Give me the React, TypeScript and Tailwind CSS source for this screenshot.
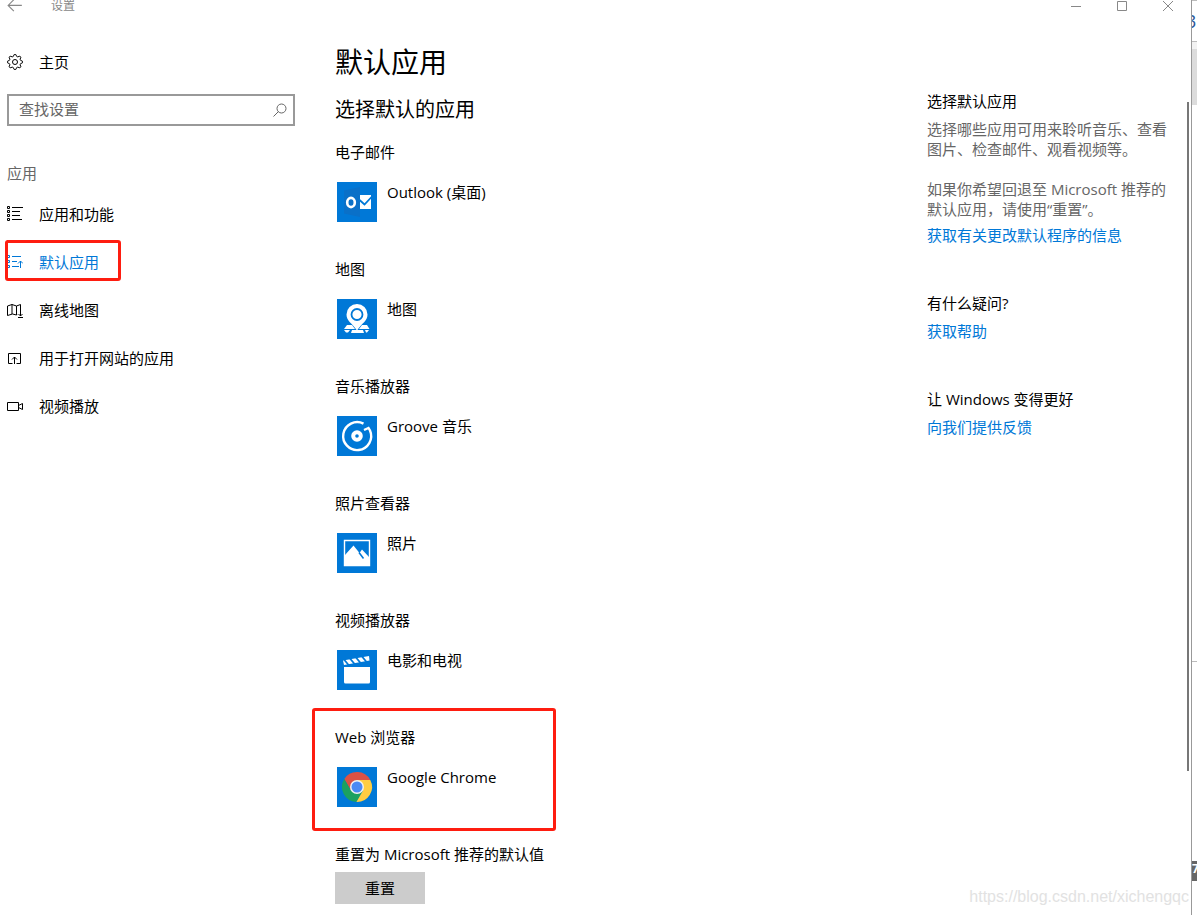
import { type ReactNode } from 'react';

interface IAppEntry {
  category: string;
  name: string;
  icon: ReactNode;
  highlighted?: boolean;
}

interface INavEntry {
  label: string;
  icon: ReactNode;
  active?: boolean;
}

const gearPoints = Array.from({ length: 32 }, (_, i) => {
  const radius = i % 4 < 2 ? 7.6 : 5.8;
  const angle = ((i - 0.5) * Math.PI) / 16;
  return `${(8 + radius * Math.sin(angle)).toFixed(2)},${(8 - radius * Math.cos(angle)).toFixed(2)}`;
}).join(' ');

function LineIcon({ children }: { children: ReactNode }) {
  return (
    <svg
      aria-hidden="true"
      viewBox="0 0 16 16"
      className="h-4 w-4 shrink-0"
      fill="none"
      stroke="currentColor"
      strokeWidth="1"
    >
      {children}
    </svg>
  );
}

function Tile({ children }: { children: ReactNode }) {
  return (
    <svg aria-hidden="true" viewBox="0 0 40 40" className="h-10 w-10 shrink-0 bg-[#0078d7]">
      {children}
    </svg>
  );
}

const navEntries: INavEntry[] = [
  {
    label: '应用和功能',
    icon: (
      <LineIcon>
        <path d="M.5.5h2v2h-2zM.5 4.500h2v2h-2zM.5 8.500h2v2h-2zM.5 12.500h2v2h-2z" />
        <path d="M5 1.500h11M5 5.500h8M5 9.500h8M5 13.500h10" />
      </LineIcon>
    )
  },
  {
    label: '默认应用',
    active: true,
    icon: (
      <LineIcon>
        <path d="M.5 1.500h2v2h-2zM.5 6.500h2v2h-2zM.5 11.500h2v2h-2z" />
        <path d="M5 2.500h9M5 7.500h5M5 12.500h7M13.500 14V7M11 9.500 13.500 7 16 9.500" />
      </LineIcon>
    )
  },
  {
    label: '离线地图',
    icon: (
      <LineIcon>
        <path d="M10 12.500 9.500 13 5.500 12 .5 13.500V4L5 2.500 9.500 4l4-1.500V8M5 2.500V12M9.500 4v9M13.500 8v6M11.500 12l2 2 2-2M11 15.500h5" />
      </LineIcon>
    )
  },
  {
    label: '用于打开网站的应用',
    icon: (
      <LineIcon>
        <path d="M5.500 13.500h-4v-10h12v10h-4M7.500 14V7M5 9.500 7.500 7 10 9.500" />
      </LineIcon>
    )
  },
  {
    label: '视频播放',
    icon: (
      <LineIcon>
        <path d="M.5 4.500h11v8H.5zM11.500 7.500l4-2v6l-4-2" />
      </LineIcon>
    )
  }
];

const appEntries: IAppEntry[] = [
  {
    category: '电子邮件',
    name: 'Outlook (桌面)',
    icon: (
      <Tile>
        <path d="M7 8.500 23 5v30L7 31.500z" fill="#0a70c8" />
        <ellipse cx="14" cy="20.500" rx="3.800" ry="4.600" fill="none" stroke="#fff" strokeWidth="2.600" />
        <path d="M23 13h11v14H23z" fill="#fff" />
        <path d="m22 17.500 5.500 5L35 14.500" fill="none" stroke="#0078d7" strokeWidth="1.800" />
      </Tile>
    )
  },
  {
    category: '地图',
    name: '地图',
    icon: (
      <Tile>
        <path d="M10 26h5l3 4h-11zM25 26h5l2.500 4H22zM7 31h6l-2 2.500H9zM15 31h11l1 3H14zM28 31h4l-2 2.500h-1z" fill="#fff" />
        <path
          d="M20 5A10.500 10.500 0 0 0 9.500 15.500C9.500 22 15 24 20 31.500 25 24 30.500 22 30.500 15.500A10.500 10.500 0 0 0 20 5z"
          fill="#fff"
        />
        <circle cx="20" cy="15.500" r="5.500" fill="none" stroke="#0078d7" strokeWidth="1.800" />
      </Tile>
    )
  },
  {
    category: '音乐播放器',
    name: 'Groove 音乐',
    icon: (
      <Tile>
        <path d="M26.500 7.600A14 14 0 1 0 33 14.500L31.500 12l-4.500 2" fill="none" stroke="#fff" strokeWidth="2.400" />
        <circle cx="20" cy="20" r="3.800" fill="none" stroke="#fff" strokeWidth="4" />
      </Tile>
    )
  },
  {
    category: '照片查看器',
    name: '照片',
    icon: (
      <Tile>
        <path d="M7.500 7.500h25v25h-25z" fill="none" stroke="#fff" strokeWidth="1.400" />
        <path d="M8 22l8.500-9.500 6 7.500 2.500-3.500L32 24v8H8z" fill="#fff" />
        <path d="m22 19.500 4.500 6" stroke="#0078d7" strokeWidth="1.500" />
      </Tile>
    )
  },
  {
    category: '视频播放器',
    name: '电影和电视',
    icon: (
      <Tile>
        <path d="M7 17h26v15a1.500 1.500 0 0 1-1.500 1.500h-23A1.500 1.500 0 0 1 7 32z" fill="#fff" />
        <path d="M6 10.500 32 6l.500 4.500L7 15z" fill="#fff" />
        <path d="m7 9.500 5 6M13 8.500l5 6M19 7.500l5 6M25 6.500l5 6" stroke="#0078d7" strokeWidth="1.800" />
      </Tile>
    )
  },
  {
    category: 'Web 浏览器',
    name: 'Google Chrome',
    highlighted: true,
    icon: (
      <Tile>
        <path d="M7.300 12.010A15 15 0 0 1 33.270 13H20l-6.060 10.500z" fill="#db5144" />
        <path d="M19.430 34.990A15 15 0 0 1 7.300 12.010l6.640 11.490h12.120z" fill="#1ba15f" />
        <path d="M33.270 13a15 15 0 0 1-13.840 21.990l6.630-11.490L20 13z" fill="#ffcd41" />
        <circle cx="20" cy="20" r="7" fill="#f1f1f1" />
        <circle cx="20" cy="20" r="5.500" fill="#4a8af4" />
      </Tile>
    )
  }
];

function TitleBar() {
  return (
    <header className="flex h-3 items-center justify-between text-[#888]">
      <div className="flex items-center gap-7 pl-[7px]">
        <button type="button" aria-label="返回">
          <svg aria-hidden="true" viewBox="0 0 14 14" className="h-4 w-4" fill="none" stroke="currentColor">
            <path d="M13 6.500H1M6 1.500l-5 5 5 5" />
          </svg>
        </button>
        <span className="text-xs">设置</span>
      </div>
      <div className="flex">
        <button type="button" aria-label="最小化" className="flex w-[46px] justify-center">
          <svg aria-hidden="true" viewBox="0 0 12 12" className="h-3 w-3" stroke="currentColor">
            <path d="M1 6.500h10" />
          </svg>
        </button>
        <button type="button" aria-label="最大化" className="flex w-[46px] justify-center">
          <svg aria-hidden="true" viewBox="0 0 12 12" className="h-3 w-3" fill="none" stroke="currentColor">
            <path d="M1.500 1.500h9v9h-9z" />
          </svg>
        </button>
        <button type="button" aria-label="关闭" className="flex w-[46px] justify-center">
          <svg aria-hidden="true" viewBox="0 0 12 12" className="h-3 w-3" stroke="currentColor">
            <path d="m1 1 10 10M11 1 1 11" />
          </svg>
        </button>
      </div>
    </header>
  );
}

function Sidebar() {
  return (
    <div className="w-[295px] shrink-0 pl-[7px] pt-[26px]">
      <a href="#home" className="flex h-12 items-center gap-4">
        <LineIcon>
          <polygon points={gearPoints} strokeLinejoin="round" />
          <circle cx="8" cy="8" r="2.500" />
        </LineIcon>
        主页
      </a>
      <div className="mt-2 flex h-8 items-center border-2 border-[#999] pl-2.5 pr-1.5">
        <input
          id="search"
          type="text"
          aria-label="查找设置"
          placeholder="查找设置"
          className="h-full min-w-0 flex-1 pb-0.5 outline-none placeholder:text-[#666]"
        />
        <svg
          aria-hidden="true"
          viewBox="0 0 14 14"
          className="h-3.5 w-3.5 shrink-0"
          fill="none"
          stroke="#666"
        >
          <circle cx="8.500" cy="5.500" r="4.500" />
          <path d="M5.500 8.500.5 13.500" />
        </svg>
      </div>
      <h2 className="mt-[37px] text-[#666]">应用</h2>
      <nav aria-label="应用" className="mt-[7px]">
        {navEntries.map(({ label, icon, active }) => (
          <a
            key={label}
            href="#"
            aria-current={active ? 'page' : undefined}
            className={`relative flex h-12 items-center gap-4 ${active ? 'text-[#0078d7]' : ''}`}
          >
            {icon}
            {label}
            {active && (
              <span className="absolute -left-0.5 top-0.5 h-[41px] w-[116px] rounded-[3px] border-3 border-[#fe1d10]" />
            )}
          </a>
        ))}
      </nav>
    </div>
  );
}

function AppSection({ category, name, icon, highlighted }: IAppEntry) {
  return (
    <section className="relative pb-[37px]">
      <h3>{category}</h3>
      <button type="button" className="mt-5 flex items-start gap-2.5 pl-0.5">
        {icon}
        <span>{name}</span>
      </button>
      {highlighted && (
        <span className="pointer-events-none absolute -left-[23px] -top-[19px] h-[123px] w-[244px] rounded-[3px] border-3 border-[#fe1d10]" />
      )}
    </section>
  );
}

function HelpPanel() {
  return (
    <aside className="flex w-[264px] shrink-0 flex-col gap-12 pr-4 pt-[79px]">
      <section>
        <h3>选择默认应用</h3>
        <p className="mt-2 text-[#666]">选择哪些应用可用来聆听音乐、查看图片、检查邮件、观看视频等。</p>
        <p className="mt-5 text-[#666]">如果你希望回退至 Microsoft 推荐的默认应用，请使用“重置”。</p>
        <a href="#info" className="mt-1.5 block text-[#0078d7]">
          获取有关更改默认程序的信息
        </a>
      </section>
      <section>
        <h3>有什么疑问?</h3>
        <a href="#help" className="mt-2 block text-[#0078d7]">
          获取帮助
        </a>
      </section>
      <section>
        <h3>让 Windows 变得更好</h3>
        <a href="#feedback" className="mt-2 block text-[#0078d7]">
          向我们提供反馈
        </a>
      </section>
    </aside>
  );
}

// Strip of the window that sits behind the settings window
function BackgroundWindow() {
  return (
    <div
      aria-hidden="true"
      className="flex w-1.5 shrink-0 flex-col overflow-hidden border-l border-[#999] bg-white"
    >
      <div className="h-[42px] border-b border-t border-[#bbb] pt-2.5 text-lg/5 text-[#2b579a]">
        <span className="-ml-1.5 block">3</span>
      </div>
      <div className="h-[7px] bg-[#f2f2f2]" />
      <div className="h-14 bg-[#dcdcdc]" />
      <div className="h-[557px] border-b border-[#bbb]" />
      <div className="mt-[199px] h-5 bg-[#666] text-xs font-bold text-white">7</div>
    </div>
  );
}

export default function App() {
  return (
    <div className="flex min-h-screen overflow-hidden bg-white font-['Open_Sans','Noto_Sans_CJK_SC',sans-serif] text-[15px]/5 text-black">
      <div className="relative min-w-0 flex-1">
        <TitleBar />
        <div className="flex">
          <Sidebar />
          <main className="min-w-0 flex-1 pb-2.5 pl-10 pt-8">
            <h1 className="text-[28px]/9">默认应用</h1>
            <h2 className="mt-4 text-xl/7">选择默认的应用</h2>
            <div className="mt-[18px]">
              {appEntries.map((entry) => (
                <AppSection key={entry.category} {...entry} />
              ))}
            </div>
            <h3>重置为 Microsoft 推荐的默认值</h3>
            <button type="button" className="mt-2 h-8 w-[90px] bg-[#ccc]">
              重置
            </button>
          </main>
          <HelpPanel />
        </div>
        <div className="absolute right-0.5 top-[102px] h-[669px] w-0.5 bg-[#777]" />
        <span className="absolute bottom-1.5 right-0.5 font-['Liberation_Sans',sans-serif] text-base/6 text-[#e2e2e2]">
          https://blog.csdn.net/xichengqc
        </span>
      </div>
      <BackgroundWindow />
    </div>
  );
}
